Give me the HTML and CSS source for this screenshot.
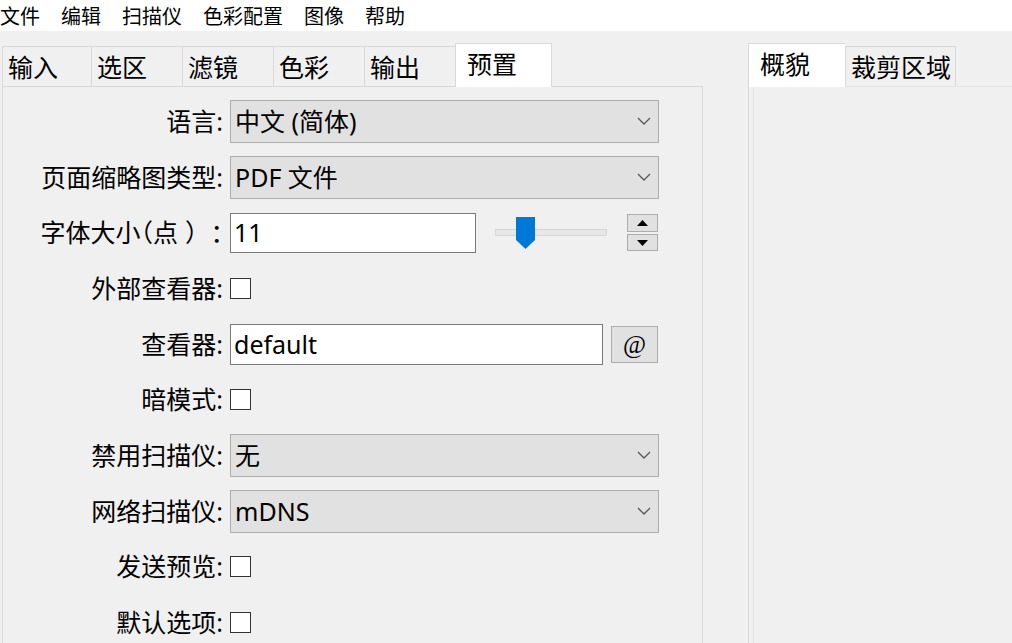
FILE: index.html
```html
<!DOCTYPE html>
<html lang="zh-CN">
<head>
<meta charset="utf-8">
<title>预置</title>
<link rel="stylesheet" href="styles.css">
</head>
<body>
<div class="menubar">
  <span class="menu-item">文件</span>
  <span class="menu-item">编辑</span>
  <span class="menu-item">扫描仪</span>
  <span class="menu-item">色彩配置</span>
  <span class="menu-item">图像</span>
  <span class="menu-item">帮助</span>
</div>
<div class="main">
  <div class="left">
    <div class="tabbar">
      <div class="tab tab-first">输入</div>
      <div class="tab">选区</div>
      <div class="tab">滤镜</div>
      <div class="tab">色彩</div>
      <div class="tab">输出</div>
      <div class="tab tab-active">预置</div>
    </div>
    <div class="pane">
      <div class="form">
        <div class="label">语言:</div>
        <div class="field">
          <div class="combo"><span>中文 (简体)</span><svg class="chevron" width="14" height="8" viewBox="0 0 14 8"><path d="M1 1 L7 7 L13 1" fill="none" stroke="#5a5a5a" stroke-width="1.4"/></svg></div>
        </div>

        <div class="label">页面缩略图类型:</div>
        <div class="field">
          <div class="combo"><span>PDF 文件</span><svg class="chevron" width="14" height="8" viewBox="0 0 14 8"><path d="M1 1 L7 7 L13 1" fill="none" stroke="#5a5a5a" stroke-width="1.4"/></svg></div>
        </div>

        <div class="label label-trim">字体大小<span class="p p-open">（</span><span class="p">点</span><span class="p p-close">）</span><span class="p p-colon">：</span></div>
        <div class="field field-row">
          <div class="lineedit lineedit-short">11</div>
          <div class="slider">
            <div class="groove"></div>
            <svg class="handle" width="19" height="32" viewBox="0 0 19 32"><path d="M0 0 H19 V23 L9.5 32 L0 23 Z" fill="#0078d7"/></svg>
          </div>
          <div class="spin">
            <div class="spin-btn"><svg width="11" height="6" viewBox="0 0 11 6"><path d="M0 6 L5.5 0 L11 6 Z" fill="#000"/></svg></div>
            <div class="spin-btn spin-down"><svg width="11" height="6" viewBox="0 0 11 6"><path d="M0 0 L5.5 6 L11 0 Z" fill="#000"/></svg></div>
          </div>
        </div>

        <div class="label">外部查看器:</div>
        <div class="field"><div class="checkbox"></div></div>

        <div class="label">查看器:</div>
        <div class="field field-row">
          <div class="lineedit lineedit-long">default</div>
          <div class="button">@</div>
        </div>

        <div class="label">暗模式:</div>
        <div class="field"><div class="checkbox"></div></div>

        <div class="label">禁用扫描仪:</div>
        <div class="field">
          <div class="combo"><span>无</span><svg class="chevron" width="14" height="8" viewBox="0 0 14 8"><path d="M1 1 L7 7 L13 1" fill="none" stroke="#5a5a5a" stroke-width="1.4"/></svg></div>
        </div>

        <div class="label">网络扫描仪:</div>
        <div class="field">
          <div class="combo"><span>mDNS</span><svg class="chevron" width="14" height="8" viewBox="0 0 14 8"><path d="M1 1 L7 7 L13 1" fill="none" stroke="#5a5a5a" stroke-width="1.4"/></svg></div>
        </div>

        <div class="label">发送预览:</div>
        <div class="field"><div class="checkbox"></div></div>

        <div class="label">默认选项:</div>
        <div class="field"><div class="checkbox"></div></div>
      </div>
    </div>
  </div>
  <div class="right">
    <div class="tabbar">
      <div class="tab tab-active tab-active-first">概貌</div>
      <div class="tab tab-wide">裁剪区域</div>
    </div>
    <div class="pane pane-right"></div>
  </div>
</div>
</body>
</html>
```

FILE: styles.css
```css
* { box-sizing: border-box; }

html, body {
  margin: 0;
  padding: 0;
  height: 100%;
  overflow: hidden;
}

body {
  background: #f0f0f0;
  color: #000;
  font-family: "Noto Sans", "Noto Sans CJK SC", sans-serif;
}

.menubar {
  height: 31px;
  background: #fff;
  display: flex;
  align-items: center;
  gap: 21px;
  font-size: 20px;
  line-height: 1;
  padding-left: 0;
  padding-top: 3px;
}

.menu-item {
  display: block;
}

.main {
  display: flex;
  height: calc(100% - 31px);
  padding-top: 12px;
}

.left {
  display: flex;
  flex-direction: column;
  width: 701px;
  margin-left: 2px;
}

.right {
  display: flex;
  flex-direction: column;
  flex: 1;
  margin-left: 45px;
  border-left: 1px solid #d9d9d9;
}

.tabbar {
  display: flex;
  align-items: flex-end;
  height: 43px;
  position: relative;
  z-index: 2;
}

.tab {
  width: 91px;
  height: 40px;
  border: 1px solid #d9d9d9;
  border-bottom: none;
  border-right: none;
  background: #f0f0f0;
  font-size: 25px;
  line-height: 1;
  padding-left: 5px;
  padding-top: 8px;
  white-space: nowrap;
}

.tab-first {
  width: 89px;
}

.tab-active {
  width: 97px;
  height: 44px;
  margin-bottom: -1px;
  background: #fff;
  border-right: 1px solid #d9d9d9;
  padding-left: 11px;
  padding-top: 8px;
}

.tab-active-first {
  width: 96px;
  border-left: none;
  border-right: none;
}

.tab-wide {
  width: 111px;
  border-right: 1px solid #d9d9d9;
  padding-left: 5px;
}

.pane {
  flex: 1;
  border: 1px solid #d9d9d9;
  background: #f0f0f0;
}

.pane-right {
  margin-left: 4px;
  border-right: none;
  border-bottom: none;
  border-color: #e3e3e3;
}

.form {
  display: grid;
  grid-template-columns: 220px auto;
  column-gap: 7px;
  grid-auto-rows: 55.67px;
  align-items: center;
  padding-top: 6.67px;
  font-size: 25px;
  line-height: 1;
}

.label {
  text-align: right;
  white-space: nowrap;
}

.label-trim {
  text-spacing-trim: space-all;
}

.p {
  display: inline-block;
}

.p-open,
.p-close,
.p-colon {
  font-feature-settings: "halt" 1;
}

.p-close {
  margin-left: 7px;
}

.p-colon {
  margin-left: 13px;
}

.field {
  display: flex;
  align-items: center;
}

.field-row {
  display: flex;
  align-items: center;
}

.combo {
  width: 429px;
  height: 43px;
  background: #e1e1e1;
  border: 1px solid #adadad;
  display: flex;
  align-items: center;
  justify-content: space-between;
  padding-left: 4px;
  padding-right: 7px;
}

.chevron {
  display: block;
}

.lineedit {
  background: #fff;
  border: 1px solid #7a7a7a;
  display: flex;
  align-items: center;
  padding-left: 3px;
}

.lineedit-short {
  width: 246px;
  height: 40px;
}

.lineedit-long {
  width: 373px;
  height: 41px;
}

.slider {
  position: relative;
  width: 112px;
  height: 32px;
  margin-left: 19px;
  display: flex;
  align-items: center;
}

.groove {
  width: 112px;
  height: 7px;
  background: #e7e7e7;
  border: 1px solid #d6d6d6;
}

.handle {
  position: absolute;
  left: 21px;
  top: 0;
}

.spin {
  display: flex;
  flex-direction: column;
  gap: 2px;
  margin-left: 20px;
}

.spin-btn {
  width: 31px;
  height: 18px;
  background: #e1e1e1;
  border: 1px solid #adadad;
  display: flex;
  align-items: center;
  justify-content: center;
}

.spin-down {
  height: 17px;
}

.spin-btn svg {
  display: block;
}

.button {
  width: 47px;
  height: 37px;
  margin-left: 8px;
  background: #e1e1e1;
  border: 1px solid #adadad;
  display: flex;
  align-items: center;
  justify-content: center;
  font-family: "Liberation Serif", "DejaVu Serif", serif;
  font-size: 25px;
  line-height: 1;
}

.checkbox {
  width: 21px;
  height: 21px;
  background: #fff;
  border: 1px solid #333;
}
```
